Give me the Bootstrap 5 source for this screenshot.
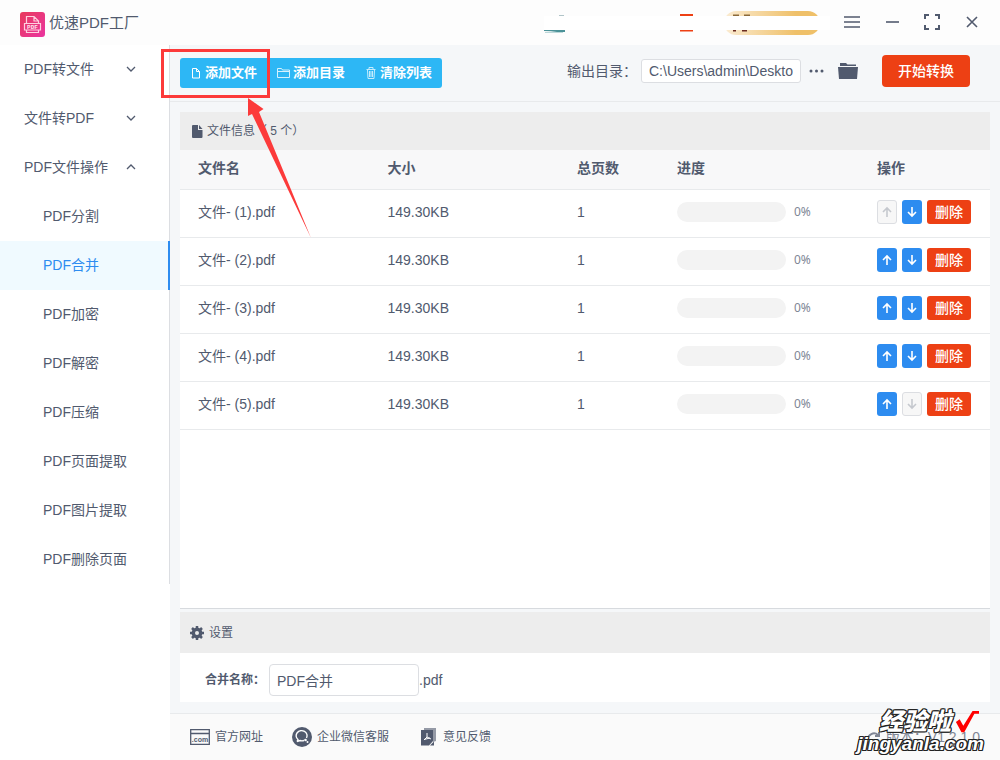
<!DOCTYPE html>
<html lang="zh-CN">
<head>
<meta charset="utf-8">
<meta name="viewport" content="width=device-width, initial-scale=1">
<title>优速PDF工厂</title>
<link href="https://cdn.jsdelivr.net/npm/bootstrap@5.3.0/dist/css/bootstrap.min.css" rel="stylesheet">
<style>
:root{--ink:#515a6e;--blue:#2d8cf0;--red:#ed4014}
body{font-family:"Liberation Sans","Noto Sans CJK SC",sans-serif;font-size:14px;line-height:20px;color:var(--ink);background:#fff}
svg{display:block;flex:none}
.titlebar{height:45px;background:#fdfdfd}
.brand-name{font-size:15px;font-weight:400;line-height:24px;color:var(--ink)}
.win-btn{width:40px;height:24px;border:0;background:none;padding:0 0 2px;display:flex;align-items:center;justify-content:center;color:var(--ink)}
.promo{width:280px;height:24px;margin-top:1px}
.promo-mask{left:0;right:-6px;top:5px;height:14px;background:#fff}
.vip-pill{width:96px;height:24px;border-radius:12px;background:linear-gradient(90deg,#fbecd3,#efc069 75%)}
.side{width:170px}
.side-menu{height:539px;border-right:1px solid #dcdee2}
.menu-head,.menu-item{height:49px;display:flex;align-items:center;width:100%;border:0;background:none;color:var(--ink);text-decoration:none}
.menu-head{padding:0 33px 2px 24px;justify-content:space-between}
.menu-item{padding:0 0 2px 43px}
.menu-item.active{background:#f0faff;color:var(--blue);width:170px;border-right:2px solid var(--blue)}
.main-area{background:#f5f7f9}
.toolbar{height:57px;border-bottom:1px solid #e8eaec;padding:0 30px 0 10px}
.toolbar-right{padding-bottom:4px}
.file-group{border-radius:3px;background:#2db7f5;overflow:hidden}
.file-group .btn{height:30px;padding:0 10px;gap:3px;font-size:13px;font-weight:700;line-height:20px;color:#fff;border:0;border-radius:0;display:flex;align-items:center}
.path-input,.name-input{border:1px solid #dcdee2;border-radius:3px;color:var(--ink);background:#fff;padding:0 7px;font-size:14px}
.path-input{width:160px;height:24px}
.name-input{width:150px;height:32px;border-radius:4px}
.icon-btn{border:0;background:none;padding:0;color:var(--ink)}
.folder-btn{margin-left:14px}
.start-btn{width:88px;height:32px;background:var(--red);color:#fff;border:0;border-radius:4px;font-size:14px;font-weight:500;padding:0}
.sect-head{background:#ededed;font-size:12px;color:var(--ink)}
.files{margin:10px 10px 0;border-bottom:1px solid #d7dade}
.files-head{height:38px;padding:0 12px}
.file-table{table-layout:fixed;margin:0;color:var(--ink);font-size:14px}
.file-table>:not(caption)>*>*{padding:0 18px 2px;height:48px;vertical-align:middle;border-bottom:1px solid #e8eaec;color:var(--ink);background:#fff}
.file-table>thead>tr>th{height:39px;background:#f8f8f9;font-weight:700}
.col-pages{width:100px}.col-prog{width:200px}.col-ops{width:131px}
.bar-track{width:109px;height:20px;border-radius:10px;background:#f3f3f3}
.pct{font-family:"Noto Sans",sans-serif;font-size:12px;color:#808695}
.ops{gap:5px}
.op-btn{width:20px;height:24px;padding:0;border:0;border-radius:3px;background:var(--blue);color:#fff;display:flex;align-items:center;justify-content:center}
.op-btn:disabled{background:#f7f7f7;border:1px solid #dcdee2;color:#c5c8ce}
.del-btn{width:44px;height:24px;padding:0;border:0;border-radius:3px;background:var(--red);color:#fff;font-size:14px;line-height:20px;font-weight:500}
.settings{margin:3px 10px 11px}
.settings-head{height:41px;padding:0 10px;gap:5px}
.settings-row{height:49px;padding-left:25px}
.name-label{width:64px;font-size:12px}
.foot{height:47px;background:#fafafa;border-top:1px solid #e8eaec;padding:0 20px;font-size:12px}
.foot a{color:var(--ink);text-decoration:none}
.foot-link{gap:5px;margin-right:29px}
.ver{font-size:14px;color:#808695}
.callout{left:160px;top:45px;pointer-events:none}
.stamp{right:16px;bottom:6px;color:#fff;font-weight:900;pointer-events:none;text-shadow:-1px -1px #222,1px -1px #222,-1px 1px #222,1px 1px #222,0 -1px #222,0 1px #222,-1px 0 #222,1px 0 #222}
.stamp-top{font-size:24px;line-height:24px;font-style:italic;gap:4px;padding-right:5px}
.stamp-url{font-size:19px;line-height:20px;font-style:italic}
</style>
</head>
<body>
<svg width="0" height="0" class="position-absolute" aria-hidden="true">
  <symbol id="up" viewBox="0 0 12 12"><path d="M6 11V2M2 6l4-4 4 4" fill="none" stroke="currentColor" stroke-width="1.600"/></symbol>
  <symbol id="down" viewBox="0 0 12 12"><path d="M6 1v9M2 6l4 4 4-4" fill="none" stroke="currentColor" stroke-width="1.600"/></symbol>
  <symbol id="chev" viewBox="0 0 10 6"><path d="M1 1l4 4 4-4" fill="none" stroke="currentColor" stroke-width="1.300"/></symbol>
</svg>
<div class="d-flex flex-column min-vh-100 position-relative">
  <header class="titlebar d-flex align-items-center ps-3 pe-2">
    <div class="d-flex align-items-center gap-1 ms-1">
      <svg width="25" height="25" viewBox="0 0 25 25" class="mt-1">
        <defs><linearGradient id="lg" x1="0" y1="0" x2="1" y2="1"><stop stop-color="#e83a5c"/><stop offset="1" stop-color="#ea35a0"/></linearGradient></defs>
        <rect width="25" height="25" rx="3" fill="url(#lg)"/>
        <path d="M6.500 11V4.500h7.500l4.500 4.500v2M14 4.500v4.500h4.500M4.500 11.500h16v6.500h-16zM6.500 18v2.500h12V18" fill="none" stroke="#ffd0df" stroke-width="1.200"/>
        <text x="12.500" y="17" text-anchor="middle" font-size="6" font-weight="700" fill="#ffe3ec" font-family="Liberation Mono, monospace">PDF</text>
      </svg>
      <h1 class="brand-name m-0">优速PDF工厂</h1>
    </div>
    <div class="promo position-relative ms-auto me-2 d-flex justify-content-end pe-1">
      <svg class="position-absolute start-0 top-0" width="160" height="24" viewBox="0 0 160 24">
        <path d="M15 4h5v1h-5z" fill="#b0c4c8"/><path d="M0 19h21v2h-8q-6-1-13-1z" fill="#4b9298"/><path d="M1 21.500h18" stroke="#bdd8da"/>
        <path d="M136 4h13M136 19.500h13" stroke="#ed4014" stroke-width="2"/>
      </svg>
      <div class="vip-pill">
        <svg width="96" height="24" viewBox="0 0 96 24"><path d="M9 4.500h6M20 4.500h6" stroke="#8c6a3a" stroke-width="2"/><path d="M9 19.500h3M18 19.500h5" stroke="#6b2b20" stroke-width="2"/></svg>
      </div>
      <div class="promo-mask position-absolute"></div>
    </div>
    <button class="win-btn" aria-label="菜单"><svg width="16" height="12" viewBox="0 0 16 12"><path d="M0 1h16M0 6h16M0 11h16" stroke="currentColor" stroke-width="1.600"/></svg></button>
    <button class="win-btn" aria-label="最小化"><svg width="13" height="12" viewBox="0 0 13 12"><path d="M0 6h13" stroke="currentColor" stroke-width="1.600"/></svg></button>
    <button class="win-btn" aria-label="最大化"><svg width="16" height="16" viewBox="0 0 16 16"><path d="M1 5V1h4M11 1h4v4M15 11v4h-4M5 15H1v-4" fill="none" stroke="currentColor" stroke-width="2"/></svg></button>
    <button class="win-btn" aria-label="关闭"><svg width="12" height="12" viewBox="0 0 12 12"><path d="M1 1l10 10M11 1L1 11" stroke="currentColor" stroke-width="1.600"/></svg></button>
  </header>

  <div class="d-flex flex-grow-1">
    <nav class="side flex-shrink-0">
      <div class="side-menu">
        <button class="menu-head">PDF转文件<svg width="10" height="6"><use href="#chev"/></svg></button>
        <button class="menu-head">文件转PDF<svg width="10" height="6"><use href="#chev"/></svg></button>
        <button class="menu-head">PDF文件操作<svg width="10" height="6" viewBox="0 0 10 6"><path d="M1 5l4-4 4 4" fill="none" stroke="currentColor" stroke-width="1.300"/></svg></button>
        <a class="menu-item" href="#">PDF分割</a>
        <a class="menu-item active" href="#">PDF合并</a>
        <a class="menu-item" href="#">PDF加密</a>
        <a class="menu-item" href="#">PDF解密</a>
        <a class="menu-item" href="#">PDF压缩</a>
        <a class="menu-item" href="#">PDF页面提取</a>
        <a class="menu-item" href="#">PDF图片提取</a>
        <a class="menu-item" href="#">PDF删除页面</a>
      </div>
    </nav>

    <div class="main-area d-flex flex-column flex-grow-1">
      <div class="toolbar d-flex align-items-center">
        <div class="file-group d-flex">
          <button class="btn"><svg width="12" height="14" viewBox="0 0 12 14"><path d="M2.500 2.500h4l3 3v6.500h-7zM6.500 2.500v3h3" fill="none" stroke="#fff"/></svg>添加文件</button>
          <button class="btn"><svg width="13" height="12" viewBox="0 0 13 12"><path d="M.5 10.500V1.500h4l1 1.500h7v7.500zM.5 4.500h12" fill="none" stroke="#d5f1fd"/></svg>添加目录</button>
          <button class="btn"><svg width="12" height="14" viewBox="0 0 12 14"><path d="M1.500 3.500h9M4 3V1.500h4V3M2.500 4l.5 8.500h6l.5-8.500M4.500 5v6M6 5v6M7.500 5v6" fill="none" stroke="#c5ecfd"/></svg>清除列表</button>
        </div>
        <div class="toolbar-right d-flex align-items-center ms-auto">
          <label for="outdir" class="me-1">输出目录：</label>
          <input id="outdir" class="path-input" type="text" value="C:\Users\admin\Deskto">
          <button class="icon-btn ms-2" aria-label="更多"><svg width="15" height="4" viewBox="0 0 15 4"><path d="M.5 2a1.500 1.500 0 1 0 3 0a1.500 1.500 0 1 0-3 0M6 2a1.500 1.500 0 1 0 3 0a1.500 1.500 0 1 0-3 0M11.500 2a1.500 1.500 0 1 0 3 0a1.500 1.500 0 1 0-3 0" fill="currentColor"/></svg></button>
          <button class="icon-btn folder-btn" aria-label="打开目录"><svg width="20" height="18" viewBox="0 0 20 18"><path d="M2 4V1h6l1.500 1.500H18V4z" fill="currentColor"/><path d="M0 5h20l-1 12H1z" fill="currentColor"/></svg></button>
          <button class="start-btn ms-4">开始转换</button>
        </div>
      </div>

      <section class="files d-flex flex-column flex-grow-1 bg-white">
        <div class="sect-head files-head d-flex align-items-center">
          <svg width="11" height="13" viewBox="0 0 11 13"><path d="M1 0h5v5h4.500v7q0 1-1 1H1q-1 0-1-1V1q0-1 1-1zM7 0l3.500 4H7z" fill="currentColor"/></svg>
          <span class="ps-1">文件信息（ 5 个）</span>
        </div>
        <table class="table file-table">
          <thead><tr><th>文件名</th><th>大小</th><th class="col-pages">总页数</th><th class="col-prog">进度</th><th class="col-ops">操作</th></tr></thead>
          <tbody id="rows"></tbody>
        </table>
      </section>

      <section class="settings bg-white">
        <div class="sect-head settings-head d-flex align-items-center">
          <svg width="14" height="14" viewBox="0 0 14 14"><circle cx="7" cy="7" r="3.700" fill="none" stroke="currentColor" stroke-width="3.400"/><path d="M7 0v3M7 11v3M0 7h3M11 7h3M2 2l2 2M10 10l2 2M12 2l-2 2M4 10l-2 2" stroke="currentColor" stroke-width="2.500"/></svg>
          <span>设置</span>
        </div>
        <div class="settings-row d-flex align-items-center pt-1">
          <label for="mname" class="name-label fw-bold">合并名称：</label>
          <input id="mname" class="name-input" type="text" value="PDF合并">
          <span>.pdf</span>
        </div>
      </section>

      <footer class="foot d-flex align-items-center">
        <a href="#" class="d-flex align-items-center foot-link"><svg width="20" height="16" viewBox="0 0 20 16"><path d="M.7.7h18.600v14.600H.7zM.7 4.500h18.600" fill="none" stroke="currentColor" stroke-width="1.300"/><text x="10" y="13" text-anchor="middle" font-size="7" font-weight="700" fill="currentColor">.com</text></svg>官方网址</a>
        <a href="#" class="d-flex align-items-center foot-link"><svg width="20" height="20" viewBox="0 0 20 20"><circle cx="10" cy="10" r="10" fill="currentColor"/><path d="M5 14.500l1-2a5.500 5 0 1 1 8.500-1.500M5 14.500l3-1q2 .7 4 0" fill="none" stroke="#fff" stroke-width="1.400"/><circle cx="13.500" cy="13" r="1.300" fill="#fff"/><circle cx="15.500" cy="15" r="1" fill="#fff"/></svg>企业微信客服</a>
        <a href="#" class="d-flex align-items-center foot-link"><svg width="20" height="18" viewBox="-3 0 20 18"><path d="M3 0h12v13l-3 1V2H3z" fill="currentColor" opacity=".6"/><path d="M0 2h12v11l-4 4.500H0z" fill="currentColor"/><path d="M6 5v4l-3 3M6 9l4 2M3 11.500l6-1.500" fill="none" stroke="#fff"/><path d="M9 17.500l4-4v4z" fill="currentColor"/></svg>意见反馈</a>
        <span class="ver ms-auto d-flex align-items-center gap-1"><svg width="16" height="14" viewBox="0 0 16 14"><path d="M2 10a6 6 0 0 1 10-5M9 6h4V2" fill="none" stroke="currentColor" stroke-width="2"/></svg>版本：V1.2.1.0</span>
      </footer>
    </div>
  </div>

  <svg class="callout position-absolute" width="160" height="200" viewBox="0 0 160 200" aria-hidden="true">
    <rect x="2.500" y="5.500" width="106" height="46" fill="none" stroke="#fc3a3a" stroke-width="3"/>
    <path d="M88 53l15.500 11-4.500 3 52 126-59-124-4 2z" fill="#fc3a3a"/>
  </svg>
  <div class="stamp position-absolute text-end" aria-hidden="true">
    <div class="stamp-top d-flex justify-content-end"><span>经验啦</span><svg width="24" height="24" viewBox="0 0 26 24"><path d="M1 12l4-3 4 7L19 0h7v3h-5L10 23H7z" fill="#f00"/></svg></div>
    <div class="stamp-url">jingyanla.com</div>
  </div>
</div>
<script src="https://cdn.jsdelivr.net/npm/bootstrap@5.3.0/dist/js/bootstrap.bundle.min.js"></script>
<script>
const total = 5;
document.getElementById('rows').innerHTML = Array.from({length: total}, (_, i) => `
<tr><td>文件- (${i + 1}).pdf</td><td>149.30KB</td><td>1</td>
<td><div class="d-flex align-items-center gap-2"><div class="bar-track"></div><span class="pct">0%</span></div></td>
<td><div class="d-flex ops">
<button class="op-btn" aria-label="上移" ${i === 0 ? 'disabled' : ''}><svg width="12" height="12"><use href="#up"/></svg></button>
<button class="op-btn" aria-label="下移" ${i === total - 1 ? 'disabled' : ''}><svg width="12" height="12"><use href="#down"/></svg></button>
<button class="del-btn flex-shrink-0">删除</button></div></td></tr>`).join('');
</script>
</body>
</html>
